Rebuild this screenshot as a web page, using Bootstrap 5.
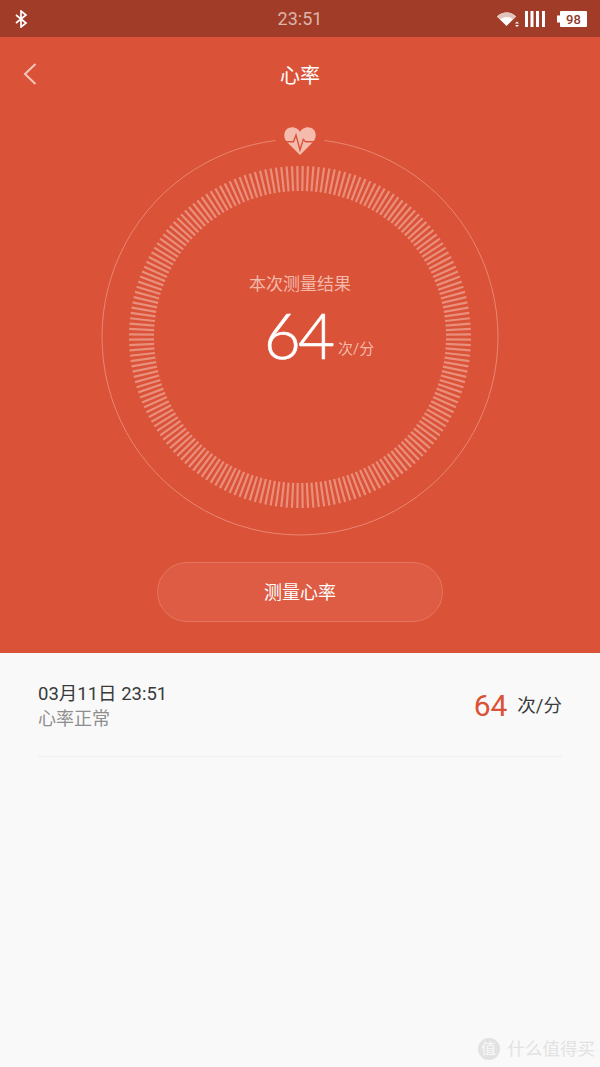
<!DOCTYPE html>
<html lang="zh">
<head>
  <meta charset="UTF-8">
  <meta name="viewport" content="width=device-width, initial-scale=1.0">
  <title>心率</title>
  <link href="https://cdn.jsdelivr.net/npm/bootstrap@5.3.0/dist/css/bootstrap.min.css" rel="stylesheet">
  <style>
    html, body { height: 100%; }
    body {
      background: #f9f9f9;
      font-family: Roboto, "Noto Sans CJK SC", sans-serif;
      overflow: hidden;
    }
    .app-screen { width: 600px; height: 1067px; }
    .status-strip { height: 37px; background: #a03c28; padding: 0 13px 0 14px; }
    .status-time { font-size: 18px; color: #dcb5ab; left: 0; right: 0; top: 8px; line-height: 21px; }
    .hero-panel { height: 616px; background: #da5237; }
    .top-title { height: 75px; }
    .top-title h1 { font-size: 20px; line-height: 26px; font-weight: 400; color: #fff; margin: 0; padding-top: 26px; }
    .back-arrow { left: 23px; top: 26px; }
    .dial-box { width: 400px; height: 400px; margin: 25px auto 0; }
    .dial-art { left: 0; top: 0; overflow: visible; }
    .dial-label { font-size: 17px; line-height: 22px; color: #f3b9aa; padding-top: 136px; }
    .dial-value { padding-top: 7px; padding-left: 38px; }
    .dial-num { font-family: Lato, sans-serif; font-weight: 300; font-size: 64px; line-height: 66px; color: #fff; letter-spacing: -3px; -webkit-text-stroke: 0.6px #fff; }
    .dial-unit { font-size: 15px; line-height: 20px; color: #f3b9aa; margin-left: 6px; padding-bottom: 9px; }
    .measure-btn {
      display: block;
      width: 286px;
      height: 60px;
      margin: 25px auto 0;
      padding: 0;
      border-radius: 30px;
      border: 1px solid #e5765f;
      background: #dd5c43;
      color: #fff;
      font-size: 18px;
      line-height: 60px;
    }
    .measure-btn:hover { background: #dd5c43; color: #fff; border-color: #e5765f; }
    .record-row { margin: 0 38px 0 38px; height: 104px; border-bottom: 1px solid #eeeeee; }
    .record-date { font-size: 18.5px; line-height: 24px; color: #3a3a3a; padding-top: 29px; }
    .record-state { font-size: 18px; line-height: 25px; color: #8e8e8e; }
    .record-num { font-size: 30px; line-height: 36px; color: #da5237; }
    .record-unit { font-size: 18.5px; line-height: 24px; color: #3a3a3a; margin-left: 10px; }
    .record-side { padding-top: 35px; }
    .mark-logo { right: 5px; bottom: 7px; color: #e2e2e2; font-size: 17.5px; line-height: 22px; }
    .mark-ring { width: 22px; height: 22px; border-radius: 50%; background: #e2e2e2; color: #f9f9f9; font-size: 15px; line-height: 22px; text-align: center; margin-right: 8px; }
    .signal-icon { margin-left: 5px; }
    .battery-icon { margin-left: 12px; }
  </style>
</head>
<body>
  <div class="app-screen position-relative">
    <div class="status-strip d-flex align-items-center justify-content-between position-relative">
      <svg width="14" height="18" viewBox="0 0 14 18" fill="none" stroke="#fff" stroke-width="1.7">
        <path d="M2 5l10 8-5 4V1l5 4-10 8"/>
      </svg>
      <div class="status-time position-absolute text-center">23:51</div>
      <div class="d-flex align-items-center">
        <svg width="23" height="18" viewBox="0 0 23 18">
          <path d="M0 6.500C5.500 1 13.500 1 19 6.500L9.500 16z" fill="#fff"/>
          <path d="M0 6.500C5.500 1 13.500 1 19 6.500L16 9.500C12 6 7 6 3 9.500z" fill="#e3c4bc"/>
          <path d="M20 11.500l2 2h-4zM20 17l2-2h-4z" fill="#fff"/>
        </svg>
        <svg class="signal-icon" width="20" height="16" viewBox="0 0 20 16" fill="#fff">
          <rect x="0" width="3" height="16"/><rect x="5.500" width="3" height="16"/><rect x="11" width="3" height="16"/><rect x="17" width="3" height="16"/>
        </svg>
        <svg class="battery-icon" width="30" height="16" viewBox="0 0 30 16">
          <rect x="0" y="4.500" width="3" height="7" fill="#fff"/>
          <rect x="3" y="0" width="27" height="16" rx="1" fill="#fff"/>
          <text x="16.500" y="13" text-anchor="middle" font-family="Roboto, sans-serif" font-size="13" font-weight="500" fill="#8f3a28">98</text>
        </svg>
      </div>
    </div>

    <div class="hero-panel">
      <div class="top-title position-relative text-center">
        <svg class="back-arrow position-absolute" width="14" height="22" viewBox="0 0 14 22" fill="none" stroke="#f5c6ba" stroke-width="2">
          <path d="M12.500 1L2 11l10.500 10"/>
        </svg>
        <h1>心率</h1>
      </div>

      <div class="dial-box position-relative text-center">
        <svg id="dialArt" class="dial-art position-absolute" width="400" height="400" viewBox="0 0 400 400"></svg>
        <div class="position-relative">
          <div class="dial-label">本次测量结果</div>
          <div class="dial-value d-flex justify-content-center align-items-end">
            <span class="dial-num">64</span><span class="dial-unit">次/分</span>
          </div>
        </div>
      </div>

      <button type="button" class="btn measure-btn">测量心率</button>
    </div>

    <div class="record-row d-flex justify-content-between">
      <div>
        <div class="record-date">03月11日 23:51</div>
        <div class="record-state">心率正常</div>
      </div>
      <div class="record-side d-flex align-items-center align-self-start">
        <span class="record-num">64</span><span class="record-unit">次/分</span>
      </div>
    </div>

    <div class="mark-logo position-absolute d-flex align-items-center">
      <span class="mark-ring">值</span>什么值得买
    </div>
  </div>

  <script>
    // dial: centre 200,200 in the box, 200 ticks round the ring
    const art = document.getElementById('dialArt');
    let html = '';
    for (let i = 0; i < 200; i++) {
      const a = (i + 0.5) * Math.PI / 100;
      const c = Math.cos(a), s = Math.sin(a);
      html += `<line x1="${(200 + 146 * c).toFixed(2)}" y1="${(200 + 146 * s).toFixed(2)}" x2="${(200 + 171 * c).toFixed(2)}" y2="${(200 + 171 * s).toFixed(2)}" stroke="#e98f7c" stroke-width="2.2"/>`;
    }
    // outer ring with a gap for the heart
    html += '<path d="M224.400 3.500A198 198 0 1 1 175.600 3.500" fill="none" stroke="#e98672" stroke-width="1"/>';
    // heart and pulse line
    html += '<path d="M200 18L187 5C182 0 184 -9.700 192 -9.700C196 -9.700 199 -7 200 -5C201 -7 204 -9.700 208 -9.700C216 -9.700 218 0 213 5z" fill="#f5bcae"/>';
    html += '<path d="M184 4.700H193.500L196 -2L200 13L203.300 2.300L205.500 4.700H216" fill="none" stroke="#da5237" stroke-width="1.400"/>';
    art.innerHTML = html;
  </script>
  <script src="https://cdn.jsdelivr.net/npm/bootstrap@5.3.0/dist/js/bootstrap.bundle.min.js"></script>
</body>
</html>
